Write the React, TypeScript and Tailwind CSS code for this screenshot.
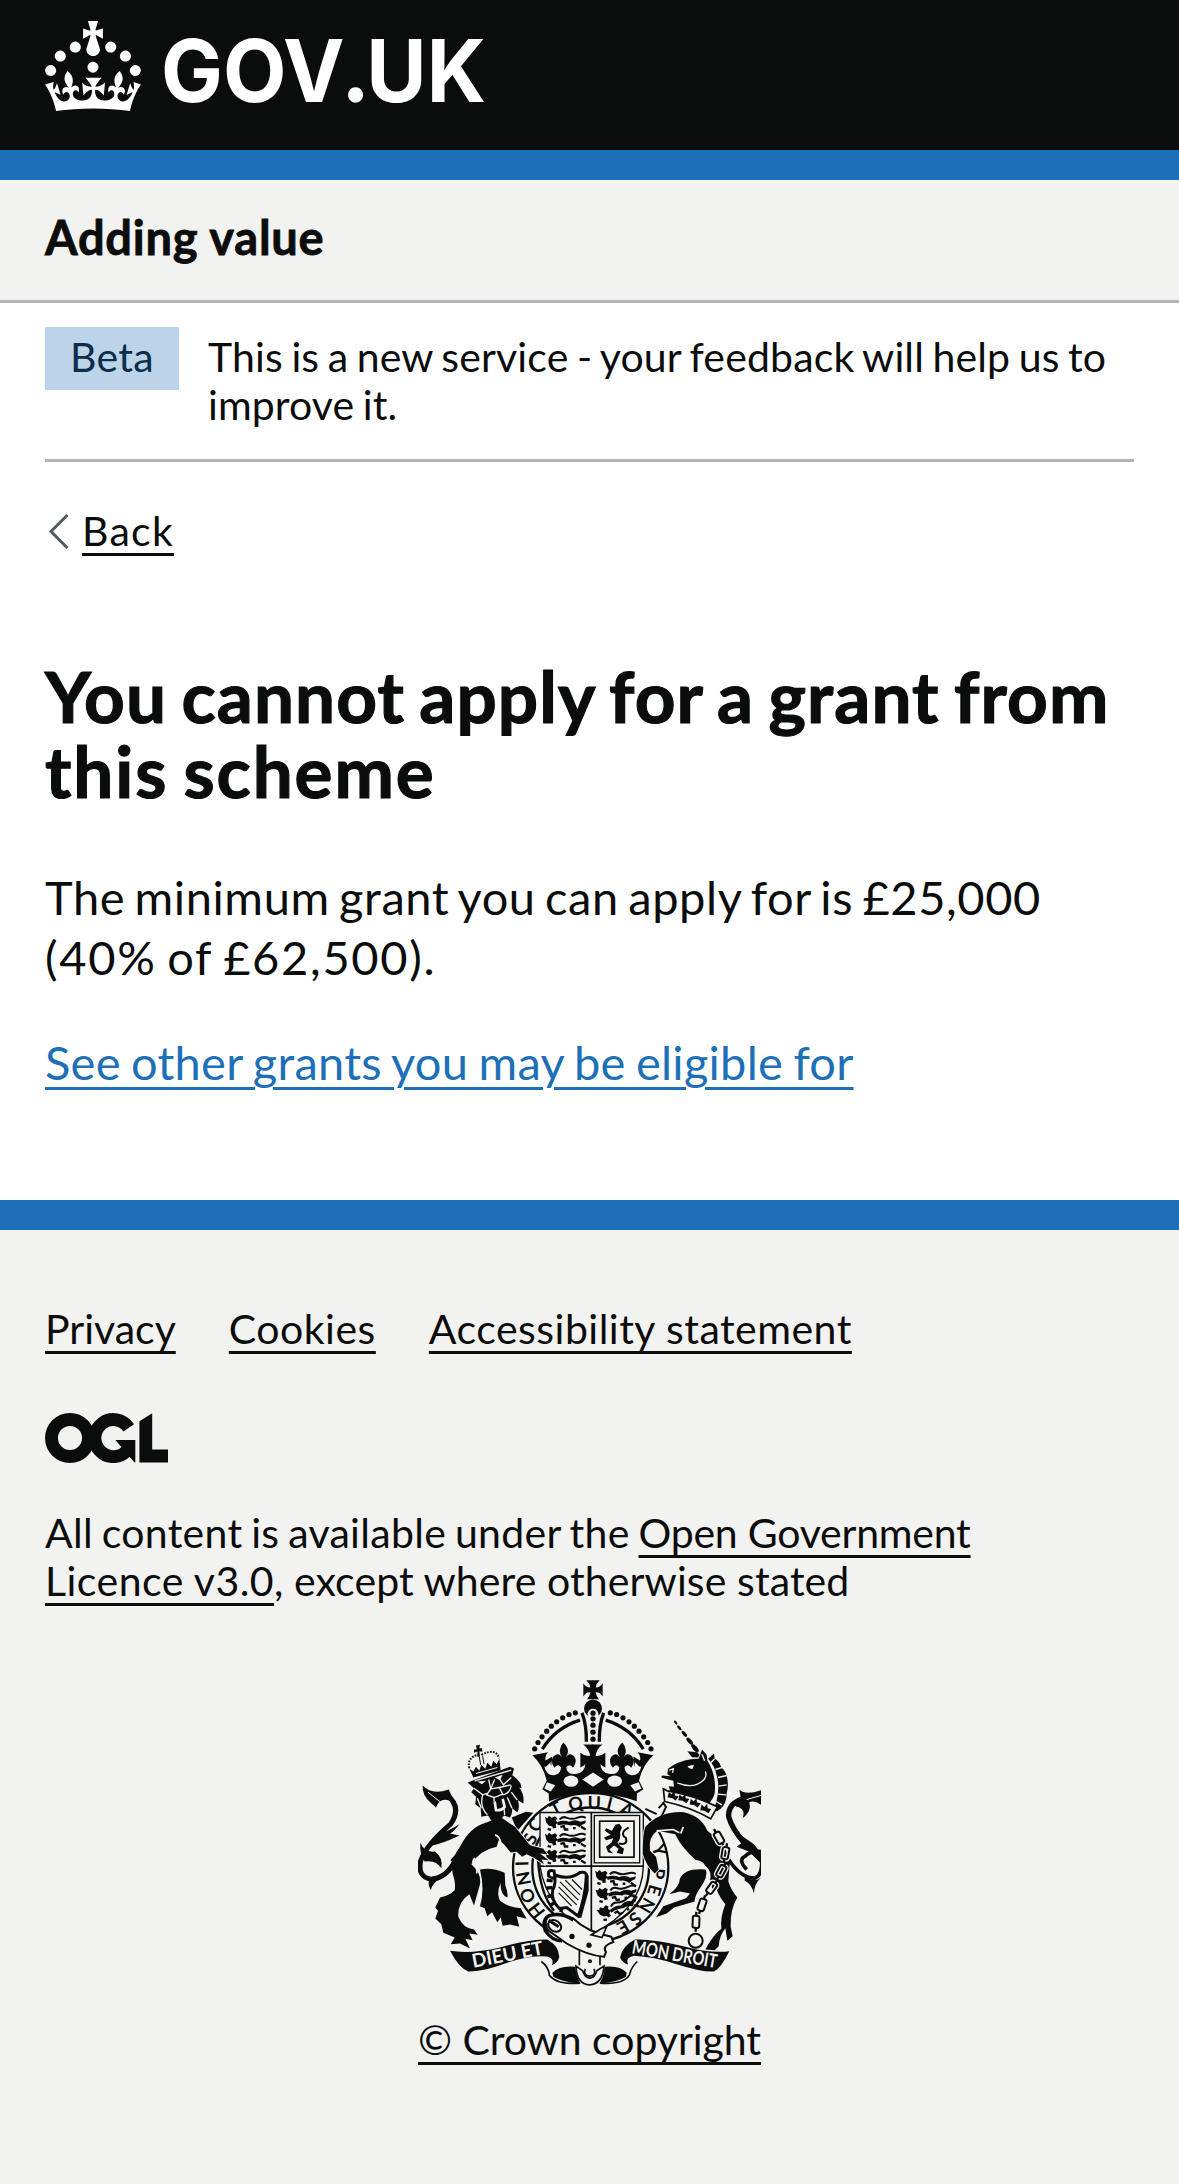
import type { ReactNode } from "react";

function Crown() {
  return (
    <svg viewBox="0 0 32 30" className="h-[90px] w-24 fill-white" aria-hidden="true">
      <path
        fillRule="evenodd"
        d="M22.6 10.4c-1 .4-2-.1-2.4-1-.4-.9.1-2 1-2.4.9-.4 2 .1 2.4 1s-.1 2-1 2.4m-5.9 6.7c-.9.4-2-.1-2.4-1-.4-.9.1-2 1-2.4.9-.4 2 .1 2.4 1s-.1 2-1 2.4m10.8-3.7c-1 .4-2-.1-2.4-1-.4-.9.1-2 1-2.4.9-.4 2 .1 2.4 1s0 2-1 2.4m3.3 4.8c-1 .4-2-.1-2.4-1-.4-.9.1-2 1-2.4.9-.4 2 .1 2.4 1s-.1 2-1 2.4M17 4.7l2.3 1.2V2.5l-2.3.7-.2-.2.9-3h-3.4l.9 3-.2.2c-.1.1-2.3-.7-2.3-.7v3.4L15 4.7c.1.1.1.2.2.2l-1.3 4c-.1.2-.1.4-.1.6 0 1.1.8 2 1.9 2.2h.7c1-.2 1.9-1.1 1.9-2.1 0-.2 0-.4-.1-.6l-1.3-4c-.1-.2 0-.2.1-.3m-7.6 5.7c.9.4 2-.1 2.4-1 .4-.9-.1-2-1-2.4-.9-.4-2 .1-2.4 1s0 2 1 2.4m-5 3c.9.4 2-.1 2.4-1 .4-.9-.1-2-1-2.4-.9-.4-2 .1-2.4 1s.1 2 1 2.4m-3.2 4.8c.9.4 2-.1 2.4-1 .4-.9-.1-2-1-2.4-.9-.4-2 .1-2.4 1s0 2 1 2.4m14.8 11c4.4 0 8.6.3 12.3.8 1.1-4.5 2.4-7 3.7-8.8l-2.5-.9c.2 1.3.3 1.9 0 2.7-.4-.4-.8-1.1-1.1-2.3l-1.2 4c.7-.5 1.3-.8 2-.9-1.1 2.5-2.6 3.1-3.5 3-1.1-.2-1.7-1.2-1.5-2.1.3-1.2 1.5-1.5 2.1-.1 1.1-2.3-.8-3-2-2.3 1.9-1.9 2.1-3.5.6-5.6-2.1 1.6-2.1 3.2-1.2 5.5-1.2-1.4-3.2-.6-2.5 1.6.9-1.4 2.1-.5 1.9.8-.2 1.1-1.7 2.1-3.5 1.9-2.7-.2-2.9-2.1-2.9-3.6.7-.1 1.9.5 2.9 1.9l.4-4.3c-1.1 1.1-2.1 1.4-3.2 1.4.4-1.2 2.1-3 2.1-3h-5.4s1.7 1.9 2.1 3c-1.1 0-2.1-.2-3.2-1.4l.4 4.3c1-1.4 2.2-2 2.9-1.9-.1 1.5-.2 3.4-2.9 3.6-1.9.2-3.4-.8-3.5-1.9-.2-1.3 1-2.2 1.9-.8.7-2.3-1.2-3-2.5-1.6.9-2.2.9-3.9-1.2-5.5-1.5 2-1.3 3.7.6 5.6-1.2-.7-3.1 0-2 2.3.6-1.4 1.8-1.1 2.1.1.2.9-.3 1.9-1.5 2.1-.9.2-2.4-.5-3.5-3 .6 0 1.2.3 2 .9l-1.2-4c-.3 1.1-.7 1.9-1.1 2.3-.3-.8-.2-1.4 0-2.7l-2.9.9C1.3 23 2.6 25.5 3.7 30c3.7-.5 7.9-.8 12.3-.8"
      />
    </svg>
  );
}

function Wordmark() {
  return (
    <svg viewBox="0 0 330 120" className="ml-[21px] h-[120px] w-[330px] overflow-visible fill-white" role="img" aria-label="GOV.UK">
      <text y="81" x="-1" textLength="325" lengthAdjust="spacingAndGlyphs" fontFamily="Inter" fontWeight="650" fontSize="87">
        GOV<tspan fontFamily="Lato" fontWeight="900" fontSize="96">.</tspan>UK
      </text>
    </svg>
  );
}

function OglMark() {
  return (
    <svg viewBox="0 0 123 50" className="block h-[50px] w-[123px]" aria-hidden="true">
      <g fill="none" stroke="#0b0c0c" strokeWidth="12.9">
        <circle cx="25" cy="25" r="18.5" />
        <path d="M83.7 14.8A18.5 18.5 0 1 0 81 38.6" />
      </g>
      <path d="M70.3 27H90.3V49.4H89.6L84.5 43.8L74 38L76.4 34Z" fill="#0b0c0c" />
      <path d="M94.4 8.3L107.2 .3V36.5H123V49.4H94.4Z" fill="#0b0c0c" />
    </svg>
  );
}

const INK = "#0b0c0c";
const PAPER = "#f2f2f0";

const motto: [string, number, number, number][] = [
  ["H", 410, 750, -128], ["O", 383, 706, -113], ["N", 371, 655, -101], ["I", 366, 610, -92],
  ["S", 391, 536, -66], ["C", 405, 494, -54], ["T", 468, 446, -27], ["Q", 527, 430, -10],
  ["U", 583, 428, 1], ["I", 629, 431, 14], ["A", 680, 450, 28],
  ["Y", 778, 570, 72], ["P", 774, 640, 95], ["E", 763, 690, 106], ["N", 740, 736, 120],
  ["S", 706, 776, 138], ["E", 669, 801, 150],
];

const arcBeads: [number, number][] = [
  [526, 158], [507, 163], [488, 173], [470, 185], [454, 198], [440, 213], [426, 230], [414, 247], [404, 266],
];

const horn: [number, number, number][] = [
  [827, 187, 7], [838, 203, 9], [853, 221, 11], [869, 243, 13], [885, 264, 15],
];

const links: [number, number, number][] = [
  [957, 533, -30], [976, 579, 10], [964, 633, 28], [935, 683, 36], [906, 734, 18], [888, 785, 2],
];

/* A walking lion about 120 wide and 44 high. */
function Passant({ x, y, turn = 0 }: { x: number; y: number; turn?: number }) {
  return (
    <g transform={`translate(${x} ${y}) rotate(${turn})`}>
      <path d="M0 4L7 8L12 1L20 7L30 2L37 8L33 15L38 22L32 28L34 37L24 39L22 33L12 31L4 22Z" />
      <path d="M36 20Q56 12 72 19Q92 10 106 19L122 15Q124 24 112 27L104 35Q90 25 78 30Q58 24 38 29Z" />
      <path d="M44 12Q52 1 66 7Q80 13 96 7Q112 1 122 7" fill="none" stroke={INK} strokeWidth="6" />
      <path d="M8 40L18 43M46 34L56 32L60 42H70M84 38H92M108 34L122 42" fill="none" stroke={INK} strokeWidth="7" />
    </g>
  );
}

function HalfCrown() {
  return (
    <g>
      {arcBeads.map(([x, y]) => (
        <circle key={x} cx={x} cy={y} r="7.8" />
      ))}
      <path d="M427 267Q466 203 540 180" fill="none" stroke={INK} strokeWidth="10" />
      <path d="M546 158Q560 195 559 245" fill="none" stroke={INK} strokeWidth="10" />
      <path d="M397 285L444 276Q433 288 437 301L457 289L452 329Q445 319 433 319Q438 346 462 345Q484 340 483 321Q473 309 463 323Q449 304 461 288Q477 274 486 292Q471 268 490 247Q514 270 497 292Q507 274 522 288Q534 304 519 323Q510 309 499 321Q500 345 530 341Q554 336 556 312L541 324V278Q553 289 570 287Q569 269 550 253H580V401Q510 401 447 423L446 400L427 387L440 362Q430 315 397 285Z" />
      <path d="M436 322Q440 340 460 338Q474 336 476 322Q470 318 464 328Q450 322 452 306ZM506 322Q510 336 530 334Q548 330 548 318L536 324V284Q528 290 528 304Q526 322 516 330Q512 320 506 322Z" fill={PAPER} />
      <ellipse cx="513" cy="363" rx="22" ry="17" fill={PAPER} />
      <path d="M441 366L466 375L452 394L433 385Z" fill={PAPER} />
    </g>
  );
}

function Crest() {
  return (
    <svg viewBox="54 60 1029 917" className="block h-[306px] w-[343px]" fill={INK} aria-hidden="true">
      {/* Garter */}
      <ellipse cx="572" cy="622" rx="233" ry="223" fill={PAPER} stroke={INK} strokeWidth="7" />
      <ellipse cx="572" cy="622" rx="175" ry="180" fill="none" stroke={INK} strokeWidth="7" />
      <path d="M414 600Q420 700 462 752" fill="none" stroke={INK} strokeWidth="7" />
      <g fontFamily="Lato" fontSize="54" fontWeight="700" textAnchor="middle">
        {motto.map(([letter, x, y, turn]) => (
          <text key={`${letter}${x}`} transform={`translate(${x} ${y}) rotate(${turn})`} y="19">{letter}</text>
        ))}
      </g>

      {/* Shield */}
      <path d="M420 457H730V618Q728 745 575 822Q440 750 420 618Z" fill={PAPER} stroke={INK} strokeWidth="4" />
      <path d="M574 457V820M420 618H730" stroke={INK} strokeWidth="5" />
      <Passant x={435} y={466} />
      <Passant x={435} y={517} />
      <Passant x={435} y={567} />
      <g fill="none" stroke={INK}>
        <rect x="583" y="466" width="136" height="142" strokeWidth="4" />
        <rect x="599" y="483" width="103" height="108" strokeWidth="5" />
      </g>
      <path d="M646 494L658 491L666 502L660 516Q664 534 652 548Q660 560 672 566L668 582L650 578L656 566L642 556L628 568L640 580L624 576L618 560L634 548L640 534L618 540L612 532L632 524L614 512L618 504L636 512Z" />
      <path d="M656 550Q684 556 678 534Q662 524 674 510L686 502" fill="none" stroke={INK} strokeWidth="6" />
      <Passant x={586} y={628} turn={3} />
      <Passant x={586} y={684} turn={-6} />
      <Passant x={588} y={745} turn={-22} />
      <path d="M462 632Q442 626 446 648Q462 660 470 646Q510 660 540 637Q560 632 560 650Q553 720 535 768L500 742L478 745Q452 720 458 690Q470 670 462 632Z" fill={PAPER} stroke={INK} strokeWidth="9" />
      <path d="M560 645V690L538 772" fill="none" stroke={INK} strokeWidth="12" />
      <path d="M480 665L535 720M476 680L530 734M476 698L515 738M496 660L540 704M516 658L546 688" stroke={INK} strokeWidth="3.5" />
      <path d="M458 662L440 660M458 682L438 684M458 704L442 710M466 726L450 736M486 742L482 756" stroke={INK} strokeWidth="10" />

      {/* Royal crown */}
      <HalfCrown />
      <g transform="translate(1157 0) scale(-1 1)">
        <HalfCrown />
      </g>
      <path d="M579 337L611 358L579 380L547 358Z" fill={PAPER} />
      <path d="M559 60H599Q588 70 587 82Q600 82 608 69V109Q600 95 587 96Q588 107 597 117H561Q570 107 571 96Q558 95 550 109V69Q558 82 571 82Q570 70 559 60Z" />
      <circle cx="579" cy="145" r="27" />
      <path d="M563 175V160Q566 146 579 146Q592 146 595 160V175Z" fill={PAPER} />
      {[159, 176, 195, 216, 237].map((y) => (
        <circle key={y} cx="579" cy={y} r="8" />
      ))}

      {/* Lion */}
      <g stroke={PAPER} strokeWidth="5" paintOrder="stroke">
        <path d="M335 472L378 455L400 458L352 512Z" />
        <path d="M240 628Q275 620 314 638L316 675Q325 700 322 712Q300 704 302 668Q288 700 300 722Q325 742 362 744L380 776L350 768L358 800L330 793L308 797L302 772L292 786L276 756L262 768L254 744L240 738Q255 690 240 628Z" />
        <path d="M258 488L300 470L345 500L390 555L430 566L442 582L420 580L446 600L425 598L432 612L400 592L380 582L366 590L350 575L332 577L312 552L296 540L290 560Q240 570 214 612Q245 640 240 672L222 736L208 702Q172 726 175 770Q190 806 222 808L233 824L208 820L218 840L196 836L210 865L180 850L152 852L164 832L130 818L124 792L106 775L114 752L106 742L120 712Q150 705 164 690Q168 668 158 640Q150 600 180 560Q210 500 258 488Z" />
      </g>
      <path d="M262 492L156 604" fill="none" stroke={INK} strokeWidth="14" />
      <path d="M225 594Q210 606 232 622L230 640M285 524Q300 530 302 548" fill="none" stroke={PAPER} strokeWidth="5" />
      <path d="M138 402Q188 440 152 492Q80 552 62 602Q52 650 92 657Q140 655 166 600" fill="none" stroke={INK} strokeWidth="15" />
      <path d="M68 376Q96 406 146 388L166 430Q122 402 108 442L92 428Q66 405 68 376Z" />
      <path d="M84 396L124 428" stroke={PAPER} strokeWidth="3" />
      <path d="M108 524Q148 512 178 492Q164 512 150 520L178 526Q140 546 84 560Z" />
      <path d="M61 548Q74 578 104 574Q130 592 124 624Q108 598 74 604Q58 580 61 548Z" />
      <path d="M92 690Q78 666 96 650L132 646Q96 668 92 690Z" />
      <path d="M203 367L226 358L330 320L342 325L337 345Q366 366 364 384L358 382Q374 404 370 430L354 420Q360 446 352 456L336 444Q338 462 330 472L312 466Q296 488 280 490L264 466L244 470L242 444L226 432L228 410L214 396L222 384Z" />
      <path
        d="M224 362L334 330M222 384L248 404L266 398M266 358L272 386L284 358M296 352L310 374L334 352M272 386L260 404L282 412L308 402L298 382L332 374M272 386L298 382M282 412V424M248 404Q238 440 262 464M308 404Q330 400 334 376M334 396L352 420M322 412L336 444M310 424L314 464M232 414L244 444"
        fill="none"
        stroke={PAPER}
        strokeWidth="4"
      />
      <path d="M232 364L258 362L246 372ZM284 352L308 344L300 360Z" fill={PAPER} />
      <path d="M284 424L288 450Q304 452 314 440L308 416" fill="none" stroke={PAPER} strokeWidth="8" />
      <path d="M220 352L208 326L220 334L228 320L238 332L244 314L256 326L262 308L274 320L280 302L290 312L298 296L302 330Z" />
      <path d="M228 340L292 322" stroke={PAPER} strokeWidth="3" />
      <path d="M228 256L240 254L238 264L246 264L247 275L238 273L240 290H232L232 274L222 278L222 268L230 268Z" />
      <g fill="none" stroke={INK} strokeWidth="6" strokeDasharray="5 4">
        <path d="M208 324Q200 292 234 284" />
        <path d="M244 284Q288 262 297 294" />
      </g>
      <path d="M238 290L242 314M248 288L252 312" stroke={INK} strokeWidth="3" />

      {/* Unicorn */}
      {horn.map(([x, y, size]) => (
        <ellipse key={x} cx={x} cy={y} rx={size} ry={size * 0.45} transform={`rotate(48 ${x} ${y})`} />
      ))}
      <path d="M862 273L892 276L904 292L876 291Z" />
      <g stroke={PAPER} strokeWidth="5" paintOrder="stroke">
        <path d="M840 655Q855 622 918 628Q925 650 900 684Q884 706 884 724L822 742L800 760L768 771L790 738L858 714L870 700L840 694L808 702Q838 680 840 655Z" />
        <path d="M736 500Q780 452 852 456Q905 468 922 512Q970 545 990 596L985 664Q994 692 1012 712Q990 748 992 800L998 828L982 842L976 804Q958 826 956 858L944 870L916 868Q940 824 964 806Q960 772 976 732Q950 700 946 672L938 690L930 660Q940 622 892 604Q842 560 826 522L772 512Q744 530 750 572L768 590L776 628L764 640Q738 616 728 580Q728 520 736 500Z" />
        <path d="M804 326L818 316Q858 294 896 296L906 268L920 284L922 302Q950 345 944 400Q936 430 905 446L808 404Q812 390 806 378L822 380L820 362L804 358L784 352L786 346L812 348L802 342Z" />
      </g>
      <path d="M862 318L882 314L878 326Q868 328 862 318Z" fill={PAPER} />
      <path d="M832 368Q880 388 910 360Q922 350 916 334M906 282L914 302M808 330L820 326L818 338" fill="none" stroke={PAPER} strokeWidth="4" />
      <path d="M924 296L942 280L944 296Q958 302 964 322Q978 332 982 356Q986 380 980 400Q980 430 962 446L950 454Q942 440 950 420Q960 380 950 346Q944 316 924 296Z" />
      <path d="M932 308L944 296M946 328L966 322M954 352L980 346M956 378L980 374M954 402L978 404M948 424L966 434" stroke={PAPER} strokeWidth="4" />
      <path d="M790 386L802 392Q880 404 952 440L932 476Q870 440 794 424Z" fill={PAPER} stroke={INK} strokeWidth="5" />
      {[
        [818, 408], [850, 416], [884, 429], [916, 446],
      ].map(([x, y]) => (
        <path key={x} d="M0 -16L6 -4L17 -6L13 9L0 6L-13 9L-15 -8L-5 -4Z" transform={`translate(${x} ${y}) rotate(20)`} />
      ))}
      <path d="M776 444L790 428L798 440L784 470L768 478M736 446L770 462" fill="none" stroke={INK} strokeWidth="6" />
      <path d="M770 512L820 508L838 518M850 500L842 520M888 602Q912 604 918 628" fill="none" stroke={PAPER} strokeWidth="5" />
      <path d="M1060 408Q982 420 986 470Q996 505 1030 545L1090 606" fill="none" stroke={INK} strokeWidth="16" />
      <path d="M1018 388Q1036 406 1083 390V434Q1064 420 1048 426Q1056 452 1028 474Q1038 446 1010 440L996 430L1022 412Z" />
      <path d="M1040 418L1083 406" stroke={PAPER} strokeWidth="3" />
      <path d="M1010 516L1062 552L1083 580V604L1046 574L1010 560L1026 548Z" />
      <path d="M986 598Q1022 654 1064 654Q1092 644 1083 582M1040 628Q1012 598 1036 588Q1050 572 1084 574" fill="none" stroke={INK} strokeWidth="11" />
      <path d="M1034 650Q1066 668 1083 652Q1062 672 1062 700Q1054 670 1034 662Z" />
      {links.map(([x, y, turn]) => (
        <g key={y} transform={`translate(${x} ${y}) rotate(${turn})`} fill="none">
          <rect x="-10" y="-18" width="20" height="36" rx="6" stroke={PAPER} strokeWidth="14" />
          <path d="M0 -30V-18M0 18V30" stroke={INK} strokeWidth="7" />
          <rect x="-10" y="-18" width="20" height="36" rx="6" stroke={INK} strokeWidth="6" />
        </g>
      ))}
      <circle cx="887" cy="842" r="21" fill={PAPER} stroke={INK} strokeWidth="6" />

      {/* Belt and pendant */}
      <path d="M538 870V915M600 880V915" stroke={INK} strokeWidth="5" />
      <path d="M440 770Q470 755 520 775Q560 815 634 830L640 846Q604 858 618 876L612 890Q560 885 500 850L446 812Q432 795 440 770Z" fill={PAPER} stroke={INK} strokeWidth="6" />
      <path d="M520 780Q486 756 448 766Q424 780 436 812Q456 842 486 842" fill="none" stroke={INK} strokeWidth="10" />
      <ellipse cx="464" cy="797" rx="21" ry="16" transform="rotate(35 464 797)" fill={PAPER} stroke={INK} strokeWidth="6" />
      <path d="M446 780L476 800" stroke={INK} strokeWidth="9" />
      <circle cx="516" cy="829" r="8" />
      <circle cx="567" cy="855" r="8" />
      <circle cx="570" cy="903" r="6" />
      <path d="M574 824L604 806L620 800L606 832Z" fill={PAPER} stroke={INK} strokeWidth="5" />
      <path d="M424 904Q446 920 448 945Q470 974 540 969M712 904Q694 920 688 945Q670 974 600 969" fill="none" stroke={INK} strokeWidth="5" />
      <path d="M457 938Q480 915 526 920Q528 950 542 970Q490 968 460 950Z" />
      <path d="M680 938Q660 915 614 920Q612 950 598 970Q650 968 678 950Z" />
      <path d="M528 918Q530 972 569 974Q608 972 612 918L590 932Q586 952 569 954Q554 952 548 932Z" fill={PAPER} stroke={INK} strokeWidth="5" />
      <path d="M556 926Q548 946 569 948Q590 946 582 926" fill="none" stroke={INK} strokeWidth="5" />

      {/* Scrolls */}
      <path d="M150 872Q215 882 300 862Q380 838 442 838Q476 856 478 890Q474 908 456 915Q464 894 440 889Q395 886 330 905Q250 936 205 934Q178 925 150 872Z" />
      <path d="M988 873Q930 880 850 858Q760 836 705 838Q668 856 660 892Q668 908 684 913Q674 892 702 887Q760 890 830 912Q905 936 942 934Q962 925 988 873Z" />
      <g fill={PAPER} fontFamily="Lato" fontWeight="700" fontSize="57">
        <text transform="translate(220 923) rotate(-11)" textLength="217" lengthAdjust="spacingAndGlyphs">DIEU ET</text>
        <text transform="translate(694 879) rotate(10)" textLength="258" lengthAdjust="spacingAndGlyphs">MON DROIT</text>
      </g>
    </svg>
  );
}

function Link({ children, className }: { children: ReactNode; className: string }) {
  return (
    <a
      href="#"
      className={`whitespace-nowrap underline decoration-[3px] underline-offset-[7px] ${className}`}
    >
      {children}
    </a>
  );
}

export default function App() {
  return (
    <div className="flex min-h-[2184px] w-full flex-col bg-white font-['Lato',sans-serif] text-[41px] leading-[48px] text-[#0b0c0c]">
      <header>
        <div className="flex h-[150px] items-start bg-[#0b0c0c] px-[45px] pt-[21px]">
          <Crown />
          <Wordmark />
        </div>
        <div className="h-[30px] bg-[#1d70b8]" />
        <div className="h-[123px] border-b-[3px] border-[#b1b4b6] bg-[#f2f2f0] px-[45px] pt-[27px]">
          <span className="text-[47px] leading-[60px] font-bold tracking-[0.75px] [-webkit-text-stroke:0.8px]">Adding value</span>
        </div>
      </header>

      <main className="flex h-[897px] flex-col px-[45px]">
        <div className="flex h-[159px] items-start border-b-[3px] border-[#b1b4b6] pt-6">
          <strong className="mr-[29px] h-[63px] w-[134px] bg-[#bbd4ea] pt-[6px] text-center font-normal tracking-[0.3px] text-[#0c2d4a]">
            Beta
          </strong>
          <p className="pt-[6px] whitespace-nowrap">
            <span className="block tracking-[0.15px] [word-spacing:-2.2px]">This is a new service - your feedback will help us to</span>
            <span className="block tracking-[0.1px] [word-spacing:-2px]">improve it.</span>
          </p>
        </div>

        <div className="mt-[45px] flex h-12 items-center">
          <svg viewBox="0 0 22 36" className="ml-[3px] h-9 w-[22px] fill-none stroke-[#505a5f] stroke-3" aria-hidden="true">
            <path d="M19.5 2L3 18.5L19.5 35" />
          </svg>
          <Link className="ml-3 tracking-[1.25px]">Back</Link>
        </div>

        <h1 className="mt-[103px] text-[71px] leading-[75px] font-bold whitespace-nowrap [-webkit-text-stroke:1.2px]">
          <span className="block tracking-[1.1px] [word-spacing:-4px]">You cannot apply for a grant from</span>
          <span className="block tracking-[1.9px] [word-spacing:-4px]">this scheme</span>
        </h1>

        <p className="mt-[59px] text-[47px] leading-[60px] whitespace-nowrap">
          <span className="block tracking-[0.6px] [word-spacing:-3.3px]">The minimum grant you can apply for is £25,000</span>
          <span className="block tracking-[1.7px] [word-spacing:-3px]">(40% of £62,500).</span>
        </p>
        <p className="mt-[45px] text-[47px] leading-[60px] text-[#1d70b8]">
          <Link className="tracking-[0.25px] [word-spacing:-2px]">See other grants you may be eligible for</Link>
        </p>
      </main>

      <footer className="flex grow flex-col border-t-[30px] border-[#1d70b8] bg-[#f2f2f0] px-[45px] pt-[75px]">
        <nav className="flex">
          <Link className="mr-[53px]">Privacy</Link>
          <Link className="mr-[53px] tracking-[0.5px]">Cookies</Link>
          <Link className="tracking-[0.49px]">Accessibility statement</Link>
        </nav>
        <div className="mt-[60px]">
          <OglMark />
        </div>
        <p className="mt-[46px] whitespace-nowrap">
          <span className="block">
            <span className="tracking-[0.3px] [word-spacing:-2px]">All content is available under the </span>
            <Link className="tracking-[-0.23px]">Open Government</Link>
          </span>
          <span className="block">
            <Link className="tracking-[0.47px]">Licence v3.0</Link>
            <span className="tracking-[0.1px]">, except where otherwise stated</span>
          </span>
        </p>
        <div className="mt-[75px] flex flex-col items-center self-center">
          <Crest />
          <Link className="mt-[30px] tracking-[-0.05px]">© Crown copyright</Link>
        </div>
      </footer>
    </div>
  );
}
